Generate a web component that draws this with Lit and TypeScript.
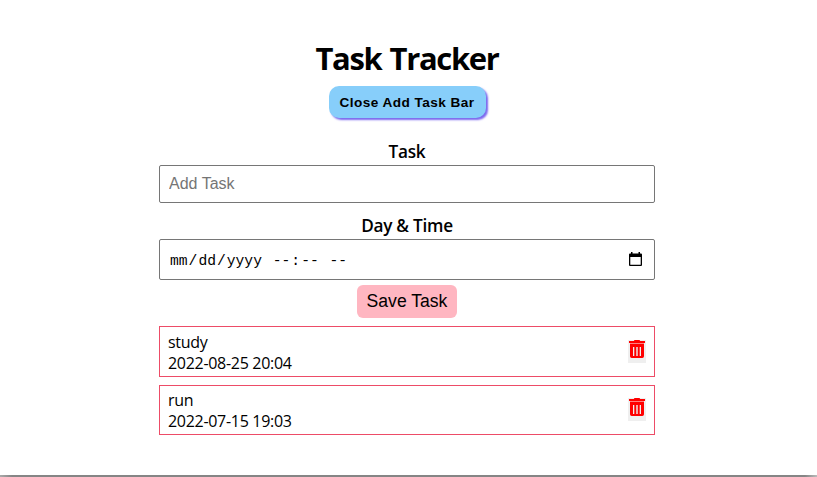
import { LitElement, html, css } from "lit";
import { customElement, state } from "lit/decorators.js";

interface Task {
  text: string;
  day: string;
}

@customElement("app-root")
export class AppRoot extends LitElement {
  static styles = css`
    :host {
      display: flex;
      flex-direction: column;
      align-items: center;
      box-sizing: border-box;
      height: 477px;
      padding: 37px 3px 0 0;
      background: #fff;
      color: #000;
      font: 16px/21px "Open Sans", "Noto Sans", sans-serif;
      overflow: hidden;
      position: relative;
    }
    .title {
      margin: 0;
      font-size: 31px;
      line-height: 42px;
      padding-bottom: 1px;
      font-weight: 700;
      letter-spacing: -1.35px;
      word-spacing: 1.5px;
      white-space: nowrap;
    }
    button {
      border: 0;
      padding: 0;
      margin: 0;
      color: #000;
      font-family: "Liberation Sans", sans-serif;
      cursor: pointer;
    }
    .toggle {
      width: 157px;
      height: 32px;
      margin-top: 6px;
      border-radius: 10px;
      background: #87cefa;
      box-shadow: 2px 2px 2px #7b68ee;
      font-size: 13.6px;
      font-weight: 700;
      letter-spacing: 0.45px;
    }
    .form {
      display: flex;
      flex-direction: column;
      align-items: center;
      width: 496px;
      margin-top: 23px;
    }
    .label {
      height: 24px;
      line-height: 22px;
      font-size: 17.2px;
      font-weight: 580;
      letter-spacing: -0.25px;
    }
    .field {
      box-sizing: border-box;
      width: 496px;
      border: 1px solid #767676;
      border-radius: 2px;
      background: #fff;
      padding: 0 9px;
      outline: 0;
    }
    .name {
      height: 38px;
      margin-bottom: 12px;
      font: 16px "Liberation Sans", sans-serif;
    }
    .name::placeholder {
      color: #757575;
    }
    .date {
      display: flex;
      align-items: center;
      justify-content: space-between;
      height: 41px;
      padding-right: 11px;
      font: 14.66px "Liberation Mono", monospace;
      white-space: pre;
    }
    .value {
      padding-top: 2px;
    }
    .part {
      padding: 0 1px;
    }
    .calendar {
      display: block;
      width: 15px;
      height: 15px;
    }
    .save {
      width: 100px;
      height: 33px;
      margin-top: 5px;
      border-radius: 6px;
      background: #ffb6c1;
      font-size: 17.6px;
    }
    .tasks {
      display: flex;
      flex-direction: column;
      gap: 8px;
      width: 496px;
      margin-top: 8px;
    }
    .task {
      display: flex;
      justify-content: space-between;
      box-sizing: border-box;
      height: 51px;
      border: 1px solid #ed4c67;
      padding: 5px 8px 0;
      letter-spacing: -0.3px;
    }
    .task + .task {
      height: 50px;
      padding-top: 4px;
    }
    .remove {
      display: flex;
      align-items: flex-start;
      width: 18px;
      height: 23px;
      margin-top: 8px;
      background: #efefef;
    }
    .remove svg {
      display: block;
      width: 18px;
      height: 18px;
    }
    .edge {
      position: absolute;
      left: 0;
      right: 0;
      bottom: 0;
      height: 2px;
      background: linear-gradient(90deg, #aaa, #858585 12px calc(100% - 12px), #bbb);
    }
  `;

  @state() private tasks: Task[] = [
    { text: "study", day: "2022-08-25 20:04" },
    { text: "run", day: "2022-07-15 19:03" },
  ];

  private remove(task: Task) {
    this.tasks = this.tasks.filter((t) => t !== task);
  }

  render() {
    return html`
      <h1 class="title">Task Tracker</h1>
      <button class="toggle">Close Add Task Bar</button>
      <div class="form">
        <label class="label">Task</label>
        <input class="field name" type="text" placeholder="Add Task" />
        <label class="label">Day &amp; Time</label>
        <div class="field date">
          <div class="value"><span class="part">mm</span>/<span class="part">dd</span>/<span class="part">yyyy</span> <span class="part">--</span>:<span class="part">--</span> <span class="part">--</span></div>
          <svg class="calendar" viewBox="0 0 15 15">
            <path fill="#000" fill-rule="evenodd" d="M3 0h1.5v1.5h6V0H12v1.5h1q1 0 1 1V13q0 1-1 1H2q-1 0-1-1V2.500q0-1 1-1h1zM2.300 5v7.700h10.400V5z" />
          </svg>
        </div>
        <button class="save">Save Task</button>
      </div>
      <div class="tasks">
        ${this.tasks.map(
          (task) => html`
            <div class="task">
              <div>
                <div>${task.text}</div>
                <div>${task.day}</div>
              </div>
              <button class="remove" aria-label="Delete" @click=${() => this.remove(task)}>
                <svg viewBox="0 0 18 18">
                  <path fill="#ff8080" d="M2 3h14v1.500H2z" />
                  <path fill="#f00" fill-rule="evenodd" d="M6.500 0h5l.7 1H17v2H1V1h4.800zM2 4h14v12.300Q16 18 14.300 18H3.700Q2 18 2 16.300zM5 7v9h1.300V7zM8.300 7v9h1.400V7zM11.700 7v9H13V7z" />
                </svg>
              </button>
            </div>
          `
        )}
      </div>
      <div class="edge"></div>
    `;
  }
}
